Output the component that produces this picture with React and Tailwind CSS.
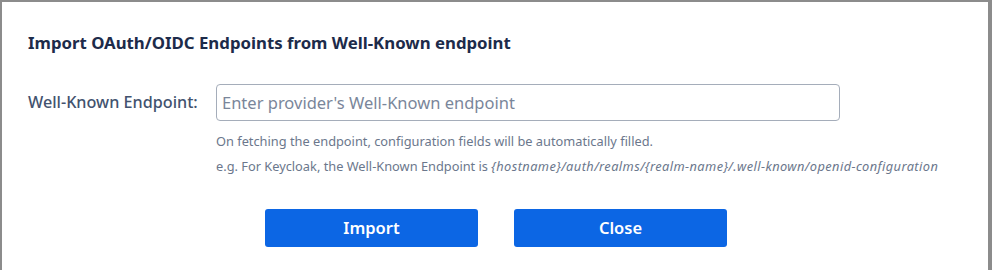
export default function App() {
  return (
    <div className="w-[992px] h-[270px] bg-[#8c8c8c] pt-[2px] pl-[2px] pr-[4px] overflow-hidden" style={{ fontFamily: '"Noto Sans", "Open Sans", sans-serif' }}>
      <div className="w-full h-full bg-white">
        <div className="pt-[29px] pl-[26px]">
          <h2 className="text-[16.8px] leading-[24px] font-bold text-[#1d2b4a]">Import OAuth/OIDC Endpoints from Well-Known endpoint</h2>
        </div>
        <div className="flex items-center mt-[29px] pl-[26px]">
          <label className="w-[188px] text-[16.2px] font-medium text-[#42526e]">Well-Known Endpoint:</label>
          <input
            className="w-[624px] h-[37px] border border-[#a5adba] rounded-[4px] px-[5px] text-[16.5px] text-[#172b4d] placeholder:text-[#7a869a] outline-none"
            placeholder="Enter provider's Well-Known endpoint"
          />
        </div>
        <div className="pl-[214px] mt-[8px] text-[12.8px] leading-[25px] text-[#6b778c]">
          <div>On fetching the endpoint, configuration fields will be automatically filled.</div>
          <div>
            e.g. For Keycloak, the Well-Known Endpoint is{' '}
            <i className="tracking-[0.42px]">{'{hostname}/auth/realms/{realm-name}/.well-known/openid-configuration'}</i>
          </div>
        </div>
        <div className="flex justify-center gap-[36px] mt-[30px] pl-[2px]">
          <button className="w-[213px] h-[38px] rounded-[3px] bg-[#0c66e4] text-white text-[16.5px] font-semibold">Import</button>
          <button className="w-[213px] h-[38px] rounded-[3px] bg-[#0c66e4] text-white text-[16.5px] font-semibold">Close</button>
        </div>
      </div>
    </div>
  );
}
